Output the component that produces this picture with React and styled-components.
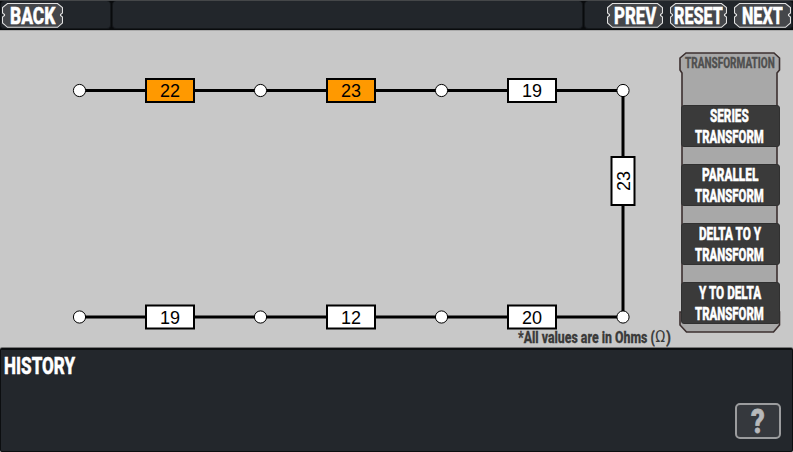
import React, { useLayoutEffect, useRef, useState } from "react";
import styled, { createGlobalStyle } from "styled-components";

const GlobalStyle = createGlobalStyle`
  * { box-sizing: border-box; }
  body { margin: 0; background: #c8c8c8; overflow: hidden; }
`;

const Screen = styled.div`
  width: 793px;
  height: 452px;
  display: flex;
  flex-direction: column;
  background: #c8c8c8;
  font-family: Roboto, "Liberation Sans", sans-serif;
`;

const Toolbar = styled.header`
  height: 30px;
  display: flex;
  gap: 1px;
  background: #090b0d;
  border-top: 1px solid #454749;
  border-bottom: 1px solid #090b0d;
  box-shadow: 0 1px 0 #aaa;
`;

const ToolbarSection = styled.div`
  width: ${(p) => p.$width}px;
  display: flex;
  gap: 7px;
  padding: 1px 1px 0;
  justify-content: ${(p) => (p.$end ? "flex-end" : "flex-start")};
  background: #22262b;
  border: 1px solid #14171a;
  border-top: 0;
  border-radius: 4px;
`;

const FrameButton = styled.button`
  position: relative;
  width: ${(p) => p.$width}px;
  height: 26px;
  flex: none;
  padding: 1px 0 0;
  border: 0;
  background: none;
  display: flex;
  align-items: center;
  justify-content: center;
  font-family: inherit;
`;

const FrameArt = styled.svg`
  position: absolute;
  inset: 0;
`;

const FitBox = styled.span`
  position: relative;
  display: block;
  width: ${(p) => p.$width}px;
  height: ${(p) => p.$size}px;
  flex: none;
`;

const FitText = styled.span`
  display: block;
  width: max-content;
  transform-origin: 0 0;
  white-space: pre;
  font-size: ${(p) => p.$size}px;
  line-height: ${(p) => p.$size}px;
  font-weight: ${(p) => p.$weight};
  color: ${(p) => p.$color};
  -webkit-text-stroke: ${(p) => p.$stroke}px ${(p) => p.$color};
`;

/* Condenses a line of text to an exact width. */
function Condensed({ width, size, color = "#fff", weight = 800, stroke = 0.5, children }) {
  const ref = useRef(null);
  const [scale, setScale] = useState(1);
  useLayoutEffect(() => {
    setScale(width / ref.current.offsetWidth);
  }, [width]);
  return (
    <FitBox $width={width} $size={size}>
      <FitText
        ref={ref}
        $size={size}
        $color={color}
        $weight={weight}
        $stroke={stroke}
        style={{ transform: `scaleX(${scale})` }}
      >
        {children}
      </FitText>
    </FitBox>
  );
}

function ToolButton({ width, textWidth, children }) {
  const r = width - 0.5;
  const d = `M5.5 1.5H${r - 5}L${r} 5.5V11L${r - 2} 12.5V13.5L${r} 15V21L${r - 5} 25.3H5.5L0.5 21V15L2.5 13.5V12.5L0.5 11V5.5Z`;
  return (
    <FrameButton $width={width}>
      <FrameArt width={width} height="26">
        <path d={d} fill="#45474b" stroke="#e0e0e0" strokeWidth="1.1" />
      </FrameArt>
      <Condensed width={textWidth} size={24}>{children}</Condensed>
    </FrameButton>
  );
}

const Workspace = styled.main`
  position: relative;
  height: 318px;
  display: flex;
  justify-content: space-between;
`;

const Circuit = styled.svg`
  display: block;
  flex: none;
  font-family: "Liberation Sans", Arial, sans-serif;
`;

const UnitsNote = styled.div`
  position: absolute;
  left: 518px;
  top: 299px;
  display: flex;
`;

const Panel = styled.aside`
  position: relative;
  width: 102px;
  height: 281px;
  margin: 22px 12px 0 0;
  display: flex;
  flex-direction: column;
  align-items: center;
`;

const PanelTitle = styled.div`
  position: relative;
  height: 53px;
  padding-top: 4px;
`;

const TransformList = styled.div`
  position: relative;
  display: flex;
  flex-direction: column;
  gap: 17px;
`;

const TransformButton = styled.button`
  width: 99px;
  height: 42px;
  display: flex;
  flex-direction: column;
  align-items: center;
  justify-content: flex-start;
  gap: 3px;
  padding: 1px 1px 0 0;
  border: 1px solid #303030;
  border-radius: 3px;
  background: #3a3a3a;
  font-family: inherit;
`;

const History = styled.section`
  height: 104px;
  display: flex;
  justify-content: space-between;
  padding: 4px 11px 0 3px;
  background: #23272c;
  border: 1px solid #0c0e10;
  border-top: 2px solid #0c0e10;
  border-radius: 2px;
  box-shadow: 0 -1px 0 #777;
`;

const HelpButton = styled.button`
  width: 46px;
  height: 36px;
  margin-top: 49px;
  padding: 0;
  display: flex;
  align-items: center;
  justify-content: center;
  border: 2px solid #9b9c9e;
  border-radius: 5px;
  background: #35383d;
  font-family: inherit;
`;

const nodes = [[79.5, 90.5], [260.5, 90.5], [441.5, 90.5], [623, 90.5],
  [79.5, 317], [260.5, 317], [441.5, 317], [623, 317]];

const resistors = [
  { x: 170, y: 90.5, value: 22, selected: true },
  { x: 351, y: 90.5, value: 23, selected: true },
  { x: 532, y: 90.5, value: 19 },
  { x: 623, y: 181, value: 23, vertical: true },
  { x: 170, y: 317, value: 19 },
  { x: 351, y: 317, value: 12 },
  { x: 532, y: 317, value: 20 },
];

const transforms = [
  ["SERIES", 39], ["PARALLEL", 56], ["DELTA TO Y", 62], ["Y TO DELTA", 62],
];

function Resistor({ x, y, value, selected, vertical }) {
  return (
    <g transform={`translate(${x} ${y})${vertical ? " rotate(-90)" : ""}`}>
      <rect x="-24" y="-11.5" width="48" height="23" fill={selected ? "#ff9900" : "#fff"} stroke="#000" strokeWidth="2" />
      <text x="0" y="6.5" fontSize="18" textAnchor="middle">{value}</text>
    </g>
  );
}

export default function App() {
  return (
    <>
      <GlobalStyle />
      <Screen>
        <Toolbar>
          <ToolbarSection $width={111}>
            <ToolButton width={61} textWidth={45}>BACK</ToolButton>
          </ToolbarSection>
          <ToolbarSection $width={471} />
          <ToolbarSection $width={209} $end>
            <ToolButton width={56} textWidth={42}>PREV</ToolButton>
            <ToolButton width={57} textWidth={49}>RESET</ToolButton>
            <ToolButton width={57} textWidth={41}>NEXT</ToolButton>
          </ToolbarSection>
        </Toolbar>
        <Workspace>
          <Circuit width="660" height="318" viewBox="0 30 660 318">
            <path d="M79.5 90.5H623V317H79.5" fill="none" stroke="#000" strokeWidth="3" />
            {resistors.map((r, i) => <Resistor key={i} {...r} />)}
            {nodes.map(([x, y]) => (
              <circle key={`${x}-${y}`} cx={x} cy={y} r="6.1" fill="#fff" stroke="#000" />
            ))}
          </Circuit>
          <UnitsNote>
            <Condensed width={137} size={17} color="#3a3a3a" stroke={0.3}>*All values are in Ohms (</Condensed>
            <Condensed width={11} size={16} color="#3a3a3a" weight={400} stroke={0}>Ω</Condensed>
            <Condensed width={5} size={17} color="#3a3a3a" stroke={0.2}>)</Condensed>
          </UnitsNote>
          <Panel>
            <FrameArt width="102" height="281">
              <path
                d="M7 1H95L100.5 6V18L98 21V260H100.5V273L94.5 280H7.5L1 273V260H3V21L1 18V6Z"
                fill="#a8a8a8" stroke="#3c3030" strokeWidth="1.6"
              />
            </FrameArt>
            <PanelTitle>
              <Condensed width={90} size={15} color="#505050" stroke={0.3}>TRANSFORMATION</Condensed>
            </PanelTitle>
            <TransformList>
              {transforms.map(([name, width]) => (
                <TransformButton key={name}>
                  <Condensed width={width} size={18}>{name}</Condensed>
                  <Condensed width={69} size={18}>TRANSFORM</Condensed>
                </TransformButton>
              ))}
            </TransformList>
          </Panel>
        </Workspace>
        <History>
          <Condensed width={71} size={24}>HISTORY</Condensed>
          <HelpButton>
            <Condensed width={14} size={33} color="#b8b9bb" stroke={0.8}>?</Condensed>
          </HelpButton>
        </History>
      </Screen>
    </>
  );
}
